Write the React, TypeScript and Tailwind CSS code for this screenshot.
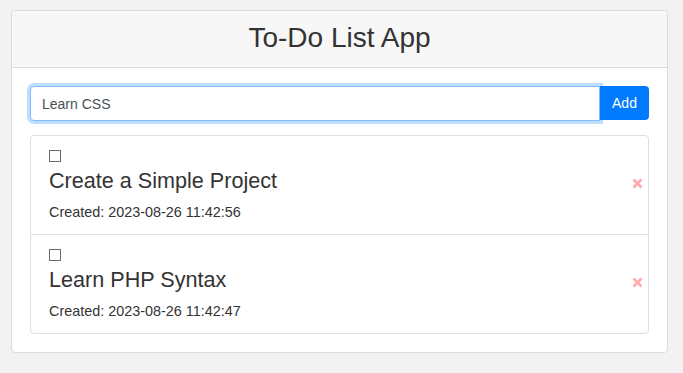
import { useState } from 'react';

type Todo = { id: number; title: string; created: string; done: boolean };

const initialTodos: Todo[] = [
    { id: 2, title: 'Create a Simple Project', created: '2023-08-26 11:42:56', done: false },
    { id: 1, title: 'Learn PHP Syntax', created: '2023-08-26 11:42:47', done: false },
];

function RemoveIcon() {
    return (
        <svg width="11" height="11" viewBox="0 0 11 11" aria-hidden="true">
            <path d="M1.5 1.5 L9.5 9.5 M9.5 1.5 L1.5 9.5" stroke="#ffabab" strokeWidth="2.6" strokeLinecap="butt" />
        </svg>
    );
}

export default function App() {
    const [text, setText] = useState('Learn CSS');
    const [todos, setTodos] = useState<Todo[]>(initialTodos);

    const toggle = (id: number) =>
        setTodos((list) => list.map((t) => (t.id === id ? { ...t, done: !t.done } : t)));

    const remove = (id: number) => setTodos((list) => list.filter((t) => t.id !== id));

    return (
        <div className="min-h-[373px] bg-[#f2f2f2] pt-[10px] text-[#333] font-['Liberation_Sans',Arial,sans-serif]">
            <div className="ml-[11px] w-[657px] rounded-[4px] border border-[#dcdcdc] bg-white">
                <div className="h-[57px] rounded-t-[4px] border-b border-[#dcdcdc] bg-[#f7f7f7] pt-[10px] text-center">
                    <h2 className="text-[28px] leading-[34px] font-normal">To-Do List App</h2>
                </div>

                <div className="px-[18px] pt-[18px] pb-[18px]">
                    <form className="flex" onSubmit={(e) => e.preventDefault()}>
                        <input
                            value={text}
                            onChange={(e) => setText(e.target.value)}
                            className="relative z-10 h-[35px] flex-1 rounded-l-[4px] border border-[#80bdff] bg-white px-[11px] text-[14px] text-[#495057] shadow-[0_0_0_3px_rgba(0,123,255,0.25)] outline-none"
                        />
                        <button type="submit" className="relative z-20 h-[34px] w-[49px] rounded-r-[4px] bg-[#007bff] text-[14px] text-white">
                            Add
                        </button>
                    </form>

                    <ul className="mt-[14px] rounded-[4px] border border-[#dfdfdf]">
                        {todos.map((todo, i) => (
                            <li
                                key={todo.id}
                                className={`flex items-center justify-between pr-[5px] pl-[18px] ${i > 0 ? 'border-t border-[#dfdfdf]' : ''}`}
                            >
                                <div className="flex flex-col pt-[14px] pb-[11px]">
                                    <span
                                        onClick={() => toggle(todo.id)}
                                        className="block h-[12px] w-[12px] cursor-pointer border border-[#6b6b6b] bg-white"
                                    />
                                    <h5 className={`mt-[6px] text-[21.6px] leading-[26px] ${todo.done ? 'line-through' : ''}`}>{todo.title}</h5>
                                    <p className="mt-[7px] text-[14.4px] leading-[22px]">Created: {todo.created}</p>
                                </div>
                                <button onClick={() => remove(todo.id)} className="mb-[3px] flex">
                                    <RemoveIcon />
                                </button>
                            </li>
                        ))}
                    </ul>
                </div>
            </div>
        </div>
    );
}
